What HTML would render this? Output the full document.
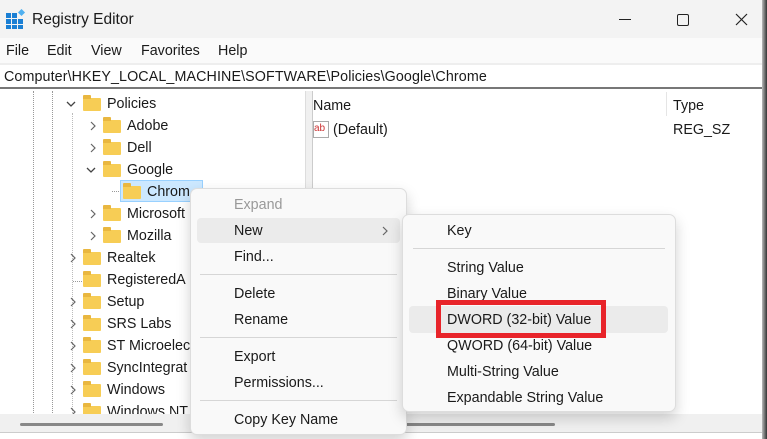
<!DOCTYPE html>
<html><head><style>
*{margin:0;padding:0;box-sizing:border-box}
body{width:767px;height:439px;overflow:hidden;background:#fff;font-family:"Liberation Sans",sans-serif;font-size:14.3px;color:#1a1a1a;position:relative}
.a{position:absolute;white-space:nowrap}
.fold{position:absolute;width:18px;height:13px;background:#f7cd55;border-radius:1px}
.fold:before{content:"";position:absolute;left:0;top:-3px;width:8px;height:4px;background:#e9b740;border-radius:1px 1px 0 0}
.chev{position:absolute;width:8px;height:10px}
.menu{position:absolute;background:#f9f9f9;border:1px solid #ddd;border-radius:7px;box-shadow:0 6px 14px rgba(0,0,0,.18)}
.sep{position:absolute;height:1px;background:#d6d6d6}
</style></head><body>
<svg width="0" height="0" style="position:absolute"><defs>
<symbol id="r" viewBox="0 0 8 10"><path d="M2 1 L6 5 L2 9" fill="none" stroke="#666" stroke-width="1.2"/></symbol>
<symbol id="d" viewBox="0 0 10 8"><path d="M1 2 L5 6 L9 2" fill="none" stroke="#444" stroke-width="1.3"/></symbol>
</defs></svg>
<!-- title -->
<div class="a" style="left:0;top:0;width:762px;height:38px;background:#f3f3f3"></div>
<svg class="a" style="left:6px;top:9px" width="20" height="20"><g fill="#1a7fd4"><rect x="0" y="4" width="5" height="5"/><rect x="6" y="4" width="5" height="5"/><rect x="0" y="10" width="5" height="5"/><rect x="6" y="10" width="5" height="5"/><rect x="12" y="10" width="5" height="5"/><rect x="0" y="16" width="5" height="4"/><rect x="6" y="16" width="5" height="4"/><rect x="12" y="16" width="5" height="4"/></g><rect x="13" y="1" width="5" height="5" fill="#4fb0f0" transform="rotate(45 15.5 3.5)"/></svg>
<div class="a" style="left:32px;top:11px;font-size:15.5px">Registry Editor</div>
<div class="a" style="left:619px;top:19px;width:12px;height:1px;background:#222"></div>
<div class="a" style="left:677px;top:14px;width:12px;height:12px;border:1.3px solid #222;border-radius:2px"></div>
<svg class="a" style="left:735px;top:13px" width="13" height="13"><path d="M1 1L12 12M12 1L1 12" stroke="#222" stroke-width="1.2"/></svg>
<div class="a" style="left:762px;top:0;width:5px;height:439px;background:linear-gradient(90deg,#bbb,#333)"></div>
<!-- menu -->
<div class="a" style="left:0;top:38px;width:762px;height:25px;background:#fafafa"></div>
<div class="a" style="left:6px;top:43px">File</div>
<div class="a" style="left:47px;top:43px">Edit</div>
<div class="a" style="left:91px;top:43px">View</div>
<div class="a" style="left:141px;top:43px">Favorites</div>
<div class="a" style="left:218px;top:43px">Help</div>
<div class="a" style="left:0;top:63px;width:762px;height:26px;background:#fff;border-top:2px solid #eee;border-bottom:2px solid #777"></div>
<div class="a" style="left:4px;top:69px;letter-spacing:0.1px">Computer\HKEY_LOCAL_MACHINE\SOFTWARE\Policies\Google\Chrome</div>
<!-- tree -->
<div class="a" style="left:33px;top:91px;height:324px;border-left:1px dotted #999"></div>
<div class="a" style="left:52px;top:91px;height:324px;border-left:1px dotted #999"></div>
<div class="a" style="left:72px;top:113px;height:300px;border-left:1px dotted #bbb"></div>
<div class="a" style="left:305px;top:91px;width:8px;height:324px;background:#f0f0f0;border-left:1px solid #ddd;border-right:1px solid #ccc"></div>
<svg class="chev" style="left:66px;top:100px;width:10px;height:8px"><use href="#d"/></svg><div class="fold" style="left:83px;top:98px"></div><div class="a" style="left:107px;top:96px">Policies</div>
<svg class="chev" style="left:89px;top:121px"><use href="#r"/></svg><div class="fold" style="left:103px;top:120px"></div><div class="a" style="left:127px;top:118px">Adobe</div>
<svg class="chev" style="left:89px;top:143px"><use href="#r"/></svg><div class="fold" style="left:103px;top:142px"></div><div class="a" style="left:127px;top:140px">Dell</div>
<svg class="chev" style="left:86px;top:166px;width:10px;height:8px"><use href="#d"/></svg><div class="fold" style="left:103px;top:164px"></div><div class="a" style="left:127px;top:162px">Google</div>
<div class="a" style="left:112px;top:191px;width:9px;border-top:1px dotted #999"></div>
<div class="a" style="left:120px;top:180px;width:83px;height:22px;background:#cce8ff;border:1px solid #99d1ff"></div>
<div class="fold" style="left:123px;top:186px"></div><div class="a" style="left:147px;top:184px">Chrom</div>
<svg class="chev" style="left:89px;top:209px"><use href="#r"/></svg><div class="fold" style="left:103px;top:208px"></div><div class="a" style="left:127px;top:206px">Microsoft</div>
<svg class="chev" style="left:89px;top:231px"><use href="#r"/></svg><div class="fold" style="left:103px;top:230px"></div><div class="a" style="left:127px;top:228px">Mozilla</div>
<svg class="chev" style="left:69px;top:253px"><use href="#r"/></svg><div class="fold" style="left:83px;top:252px"></div><div class="a" style="left:107px;top:250px">Realtek</div>
<div class="a" style="left:73px;top:281px;width:9px;border-top:1px dotted #999"></div>
<div class="fold" style="left:83px;top:274px"></div><div class="a" style="left:107px;top:272px">RegisteredA</div>
<svg class="chev" style="left:69px;top:297px"><use href="#r"/></svg><div class="fold" style="left:83px;top:296px"></div><div class="a" style="left:107px;top:294px">Setup</div>
<svg class="chev" style="left:69px;top:319px"><use href="#r"/></svg><div class="fold" style="left:83px;top:318px"></div><div class="a" style="left:107px;top:316px">SRS Labs</div>
<svg class="chev" style="left:69px;top:341px"><use href="#r"/></svg><div class="fold" style="left:83px;top:340px"></div><div class="a" style="left:107px;top:338px">ST Microelec</div>
<svg class="chev" style="left:69px;top:363px"><use href="#r"/></svg><div class="fold" style="left:83px;top:362px"></div><div class="a" style="left:107px;top:360px">SyncIntegrat</div>
<svg class="chev" style="left:69px;top:385px"><use href="#r"/></svg><div class="fold" style="left:83px;top:384px"></div><div class="a" style="left:107px;top:382px">Windows</div>
<svg class="chev" style="left:69px;top:407px"><use href="#r"/></svg><div class="fold" style="left:83px;top:406px"></div><div class="a" style="left:107px;top:404px">Windows NT</div>
<!-- right pane -->
<div class="a" style="left:313px;top:98px">Name</div>
<div class="a" style="left:666px;top:92px;height:24px;border-left:1px solid #e5e5e5"></div>
<div class="a" style="left:673px;top:98px">Type</div>
<div class="a" style="left:313px;top:121px;width:16px;height:17px;border:1px solid #aaa;font-size:10px;color:#c33;background:#fff;line-height:14px">ab</div>
<div class="a" style="left:333px;top:122px">(Default)</div>
<div class="a" style="left:673px;top:122px">REG_SZ</div>
<!-- bottom -->
<div class="a" style="left:0;top:414px;width:762px;height:18px;background:#f0f0f0"></div>
<div class="a" style="left:20px;top:423px;width:143px;height:3px;background:#888;border-radius:2px"></div>
<div class="a" style="left:400px;top:423px;width:155px;height:3px;background:#888;border-radius:2px"></div>
<div class="a" style="left:0;top:432px;width:762px;height:7px;background:#fff;border-top:1px solid #ccc"></div>
<!-- context menu -->
<div class="menu" style="left:190px;top:188px;width:217px;height:247px"></div>
<div class="a" style="left:197px;top:218px;width:203px;height:25px;background:#ebebeb;border-radius:4px"></div>
<div class="a" style="left:234px;top:197px;color:#999">Expand</div>
<div class="a" style="left:234px;top:223px">New</div>
<svg class="chev" style="left:381px;top:226px"><use href="#r"/></svg>
<div class="a" style="left:234px;top:249px">Find...</div>
<div class="sep" style="left:200px;top:274px;width:197px"></div>
<div class="a" style="left:234px;top:286px">Delete</div>
<div class="a" style="left:234px;top:312px">Rename</div>
<div class="sep" style="left:200px;top:337px;width:197px"></div>
<div class="a" style="left:234px;top:349px">Export</div>
<div class="a" style="left:234px;top:375px">Permissions...</div>
<div class="sep" style="left:200px;top:400px;width:197px"></div>
<div class="a" style="left:234px;top:412px">Copy Key Name</div>
<!-- submenu -->
<div class="menu" style="left:402px;top:214px;width:274px;height:198px"></div>
<div class="a" style="left:447px;top:223px">Key</div>
<div class="sep" style="left:413px;top:248px;width:252px"></div>
<div class="a" style="left:447px;top:260px">String Value</div>
<div class="a" style="left:447px;top:286px">Binary Value</div>
<div class="a" style="left:409px;top:306px;width:259px;height:27px;background:#ebebeb;border-radius:4px"></div>
<div class="a" style="left:447px;top:312px">DWORD (32-bit) Value</div>
<div class="a" style="left:436px;top:300px;width:170px;height:38px;border:5px solid #e8242a"></div>
<div class="a" style="left:447px;top:338px">QWORD (64-bit) Value</div>
<div class="a" style="left:447px;top:364px">Multi-String Value</div>
<div class="a" style="left:447px;top:390px">Expandable String Value</div>
</body></html>
